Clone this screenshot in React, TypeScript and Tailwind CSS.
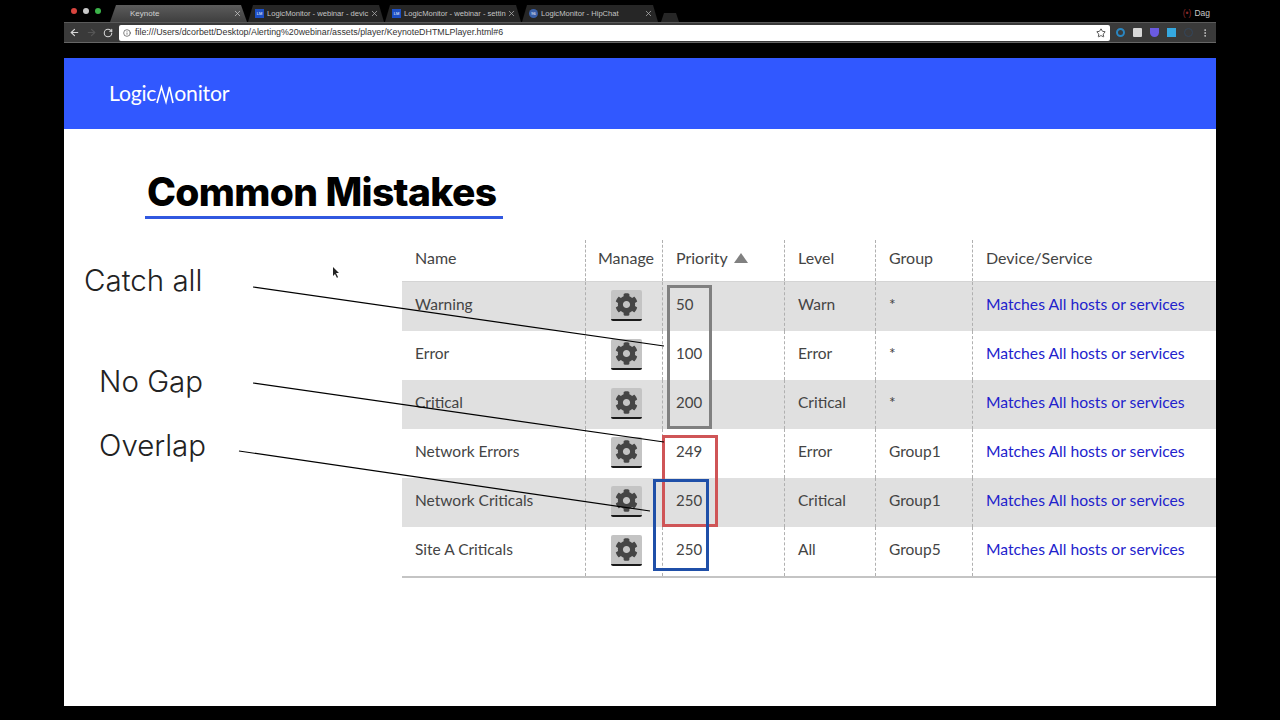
import { ArrowLeft, ArrowRight, RotateCw, Info, Star, EllipsisVertical, X } from "lucide-react";
import { FaCog } from "react-icons/fa";

const rows = [
  { name: "Warning", priority: "50", level: "Warn", group: "*" },
  { name: "Error", priority: "100", level: "Error", group: "*" },
  { name: "Critical", priority: "200", level: "Critical", group: "*" },
  { name: "Network Errors", priority: "249", level: "Error", group: "Group1" },
  { name: "Network Criticals", priority: "250", level: "Critical", group: "Group1" },
  { name: "Site A Criticals", priority: "250", level: "All", group: "Group5" },
];

const tabs = [
  { title: "LogicMonitor - webinar - devic", badge: "LM", color: "bg-[#1d4fc4]" },
  { title: "LogicMonitor - webinar - settin", badge: "LM", color: "bg-[#1d4fc4]" },
  { title: "LogicMonitor - HipChat", badge: "96", color: "bg-[#3a5fa8] rounded-full" },
];

function Tabs() {
  return (
    <div className="flex items-end h-[17px] pl-[46px]">
      <div className="flex items-center w-[137px] h-[17px] pl-[20px] pr-[5px] bg-gradient-to-b from-[#5c5c5c] to-[#3f3f3f] [clip-path:polygon(6px_0,131px_0,100%_100%,0_100%)]">
        <span className="flex-1 text-[8px] text-[#d0d0d0]">Keynote</span>
        <X size={9} className="text-[#c8c8c8]" />
      </div>
      {tabs.map((tab, i) => (
        <div
          key={i}
          className="flex items-center w-[136px] h-[17px] ml-[1px] pl-[7px] pr-[5px] bg-[#262626] [clip-path:polygon(5px_0,131px_0,100%_100%,0_100%)]"
        >
          <span className={`flex items-center justify-center shrink-0 w-[9px] h-[9px] mr-[3px] text-[4px] text-white ${tab.color}`}>{tab.badge}</span>
          <span className="flex-1 whitespace-nowrap text-[7.6px] text-[#c4c4c4]">{tab.title}</span>
          <X size={9} className="shrink-0 text-[#b0b0b0]" />
        </div>
      ))}
      <div className="w-[18px] h-[9px] ml-[3px] bg-[#262626] [clip-path:polygon(3px_0,15px_0,100%_100%,0_100%)]" />
    </div>
  );
}

function Toolbar() {
  return (
    <div className="flex items-center h-[21px] bg-[#3a3a3a] border-t border-[#5a5a5a] border-b border-b-[#666] pl-[4px] pr-[6px]">
      <ArrowLeft size={11} strokeWidth={2.5} className="ml-[1px] text-[#d8d8d8]" />
      <ArrowRight size={11} strokeWidth={2.5} className="ml-[6px] text-[#565656]" />
      <RotateCw size={10} strokeWidth={2.5} className="ml-[6px] text-[#d8d8d8]" />
      <div className="flex items-center flex-1 h-[16px] ml-[6px] px-[4px] bg-white rounded-[2px]">
        <Info size={8} className="text-[#444]" />
        <span className="flex-1 ml-[4px] text-[8.85px] text-[#333]">file:///Users/dcorbett/Desktop/Alerting%20webinar/assets/player/KeynoteDHTMLPlayer.html#6</span>
        <Star size={10} className="text-[#333]" />
      </div>
      <div className="flex items-center gap-[8px] ml-[6px]">
        <span className="w-[9px] h-[9px] rounded-full border-2 border-[#2a86c0]" />
        <span className="w-[9px] h-[9px] rounded-[1px] bg-[#d8d8d8]" />
        <span className="w-[9px] h-[9px] rounded-b-full bg-[#6a5ae0]" />
        <span className="w-[9px] h-[9px] bg-[#35a8e0]" />
        <span className="w-[9px] h-[9px] rounded-full border border-[#33465c]" />
      </div>
      <EllipsisVertical size={10} className="ml-[7px] text-[#d0d0d0]" />
    </div>
  );
}

function Logo() {
  return (
    <div className="flex items-center pl-[45px] font-['Lato',sans-serif] font-normal text-[21.2px] leading-none tracking-[-0.2px] text-white">
      <span>Logic</span>
      <svg width="18" height="22" viewBox="0 0 18 22" fill="none" stroke="white" strokeWidth="1.6" className="mt-[2px]">
        <path d="M1 19 L5.5 3 L10 18 L13.5 3 L17 19" />
      </svg>
      <span>onitor</span>
    </div>
  );
}

function GearButton() {
  return (
    <div className="flex items-center justify-center w-[31px] h-[31px] bg-[#c4c4c4] rounded-[2px] border-b-2 border-[#1a1a1a]">
      <FaCog size={23} className="text-[#454545]" />
    </div>
  );
}

const cell = "flex items-center border-l border-dashed border-[#b0b0b0]";

function Table() {
  return (
    <div className="relative flex-1 mt-[111px] text-[15.5px] text-[#444] font-['Lato',sans-serif]">
      <div className="grid grid-cols-[183px_77px_122px_91px_97px_1fr] h-[42px] text-[16px] border-b border-[#d4d4d4]">
        <div className="flex items-center pl-[13px] pb-[6px]">Name</div>
        <div className={`${cell} justify-center pb-[6px] pl-[4px]`}>Manage</div>
        <div className={`${cell} pl-[13px] pb-[6px]`}>
          Priority
          <span className="ml-[6px] border-x-[7px] border-x-transparent border-b-[10px] border-b-[#808080]" />
        </div>
        <div className={`${cell} pl-[13px] pb-[6px]`}>Level</div>
        <div className={`${cell} pl-[13px] pb-[6px]`}>Group</div>
        <div className={`${cell} pl-[13px] pb-[6px]`}>Device/Service</div>
      </div>
      {rows.map((row, i) => (
        <div key={i} className={`grid grid-cols-[183px_77px_122px_91px_97px_1fr] h-[49px] ${i % 2 === 0 ? "bg-[#e0e0e0]" : "bg-white"}`}>
          <div className="flex items-center pl-[13px] pb-[3px]">{row.name}</div>
          <div className={`${cell} justify-center pl-[4px] pb-[3px]`}>
            <GearButton />
          </div>
          <div className={`${cell} pl-[13px] pb-[5px] text-[15px]`}>{row.priority}</div>
          <div className={`${cell} pl-[13px] pb-[3px]`}>{row.level}</div>
          <div className={`${cell} pl-[13px] pb-[3px]`}>{row.group}</div>
          <div className={`${cell} pl-[13px] pb-[3px] text-[15.7px] text-[#2222cc]`}>Matches All hosts or services</div>
        </div>
      ))}
      <div className="h-[2px] bg-[#c4c4c4]" />

      <div className="absolute left-[265px] top-[45px] w-[45px] h-[144px] border-[3px] border-[#808080]" />
      <div className="absolute left-[260px] top-[195px] w-[56px] h-[92px] border-[3px] border-[#cf5557]" />
      <div className="absolute left-[251px] top-[239px] w-[56px] h-[92px] border-[3px] border-[#1f4fa8]" />
    </div>
  );
}

export default function App() {
  return (
    <div className="w-[1280px] h-[720px] overflow-hidden bg-black px-[64px] pt-[5px] font-['Liberation_Sans',sans-serif]">
      <div className="relative h-[38px]">
        <div className="absolute left-[7px] top-[3px] flex gap-[6px]">
          <span className="w-[6px] h-[6px] rounded-full bg-[#d8443e]" />
          <span className="w-[6px] h-[6px] rounded-full bg-[#c8c8c8]" />
          <span className="w-[6px] h-[6px] rounded-full bg-[#3cb44a]" />
        </div>
        <div className="absolute right-[6px] top-[2px] flex items-center gap-[3px] text-[8.5px] text-[#c8c8c8]">
          <span className="text-[#8a2a2a]">(•)</span>
          Dag
        </div>
        <Tabs />
        <Toolbar />
      </div>

      <div className="relative mt-[15px] h-[648px] bg-white">
        <div className="flex items-center h-[71px] bg-[#3158ff]">
          <Logo />
        </div>
        <div className="flex">
          <div className="w-[338px] shrink-0 font-['Inter',sans-serif] font-light text-[29.5px] leading-none text-[#222]">
            <div className="relative">
              <div className="absolute left-[83px] top-[43px] whitespace-nowrap font-extrabold text-[39px] leading-none tracking-[-0.65px] text-black">
                Common Mistakes
              </div>
              <div className="absolute left-[81px] top-[87px] w-[358px] h-[3px] bg-[#3158e0]" />
            </div>
            <div className="ml-[20px] mt-[137px]">Catch all</div>
            <div className="ml-[35px] mt-[71px]">No Gap</div>
            <div className="ml-[35px] mt-[35px]">Overlap</div>
          </div>
          <Table />
        </div>

        <svg className="absolute inset-0 pointer-events-none" width="1152" height="648" viewBox="64 58 1152 648" fill="none">
          <path d="M253 287 L664 346" stroke="black" strokeWidth="1.2" />
          <path d="M253 383 L664 442" stroke="black" strokeWidth="1.2" />
          <path d="M239 451 L650 511" stroke="black" strokeWidth="1.2" />
          <path d="M333 267 L333 276 L335 274 L337 278 L338 277 L336 273 L339 273 Z" fill="#222" />
        </svg>
      </div>
    </div>
  );
}
